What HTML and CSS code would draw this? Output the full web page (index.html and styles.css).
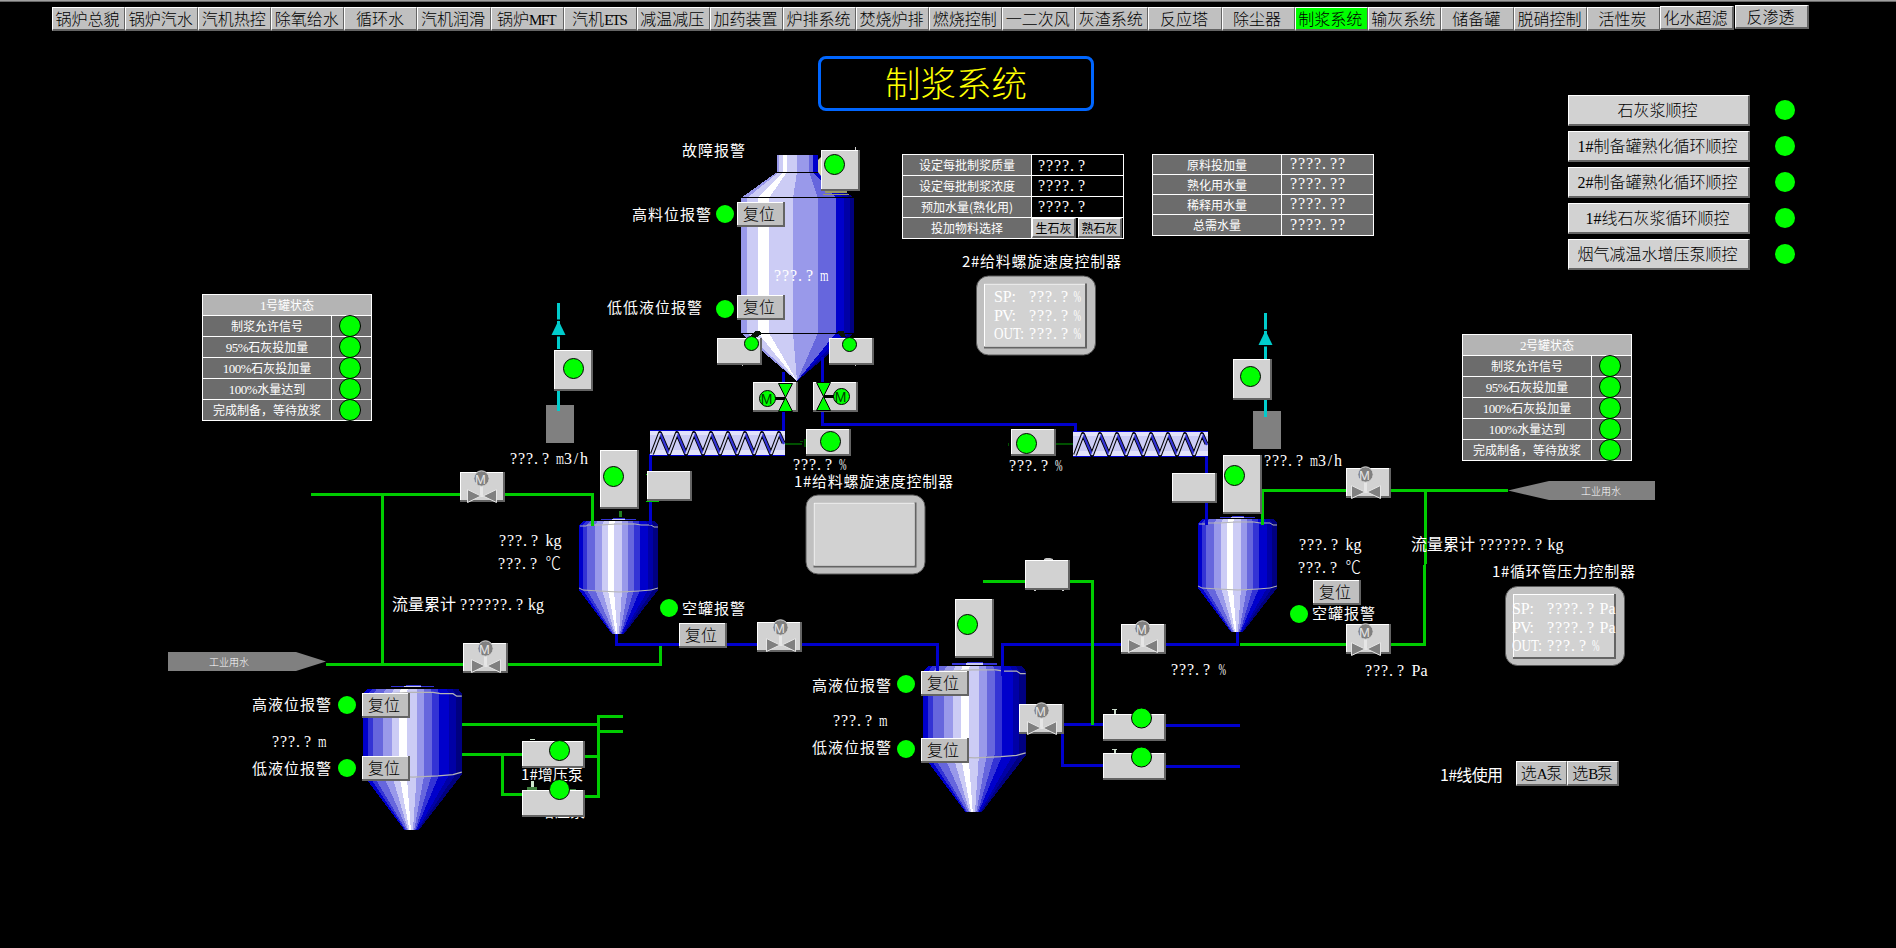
FILE: index.html
```html
<!DOCTYPE html>
<html lang="zh-CN">
<head>
<meta charset="utf-8">
<title>制浆系统</title>
<link rel="stylesheet" href="styles.css">
</head>
<body>
<div class="screen">
<nav class="nav">
<a>锅炉总貌</a><a>锅炉汽水</a><a>汽机热控</a><a>除氧给水</a><a>循环水</a><a>汽机润滑</a><a>锅炉<i class="caps">MFT</i></a><a>汽机<i class="caps">ETS</i></a><a>减温减压</a><a>加药装置</a><a>炉排系统</a><a>焚烧炉排</a><a>燃烧控制</a><a>一二次风</a><a>灰渣系统</a><a>反应塔</a><a>除尘器</a><a class="active">制浆系统</a><a>输灰系统</a><a>储备罐</a><a>脱硝控制</a><a>活性炭</a><a class="up1">化水超滤</a><a class="up2">反渗透</a>
</nav>

<svg class="mimic" width="1896" height="948" viewBox="0 0 1896 948">
<defs>
<symbol id="tank" viewBox="0 0 80 118" preserveAspectRatio="none">
<g shape-rendering="crispEdges">
<path fill="#0000cc" d="M4 3L0 7V72L33 116H34L5 72V7L8 3z"/>
<path fill="#3333d5" d="M7.6 3L4 7V72L33.6 116H35L9 72V7L12 3z"/>
<path fill="#6666dd" d="M11.3 3L8 7V72L34.2 116H36L17 72V7L19 3z"/>
<path fill="#9999ea" d="M18.6 3L16 7V72L35.4 116H37L24 72V7L26 3z"/>
<path fill="#ccccf5" d="M25 3L23 7V72L36 116H38L30 72V7L31 3z"/>
<path fill="#fff" d="M30.4 3L29 7V72L37 116H39L36 72V7L37 3z"/>
<path fill="#ccccf5" d="M35.9 3L35 7V72L38.3 116H41L44 72V7V3z"/>
<path fill="#9999ea" d="M43 3V72L40 116H41L50 72V7L49 3z"/>
<path fill="#6666dd" d="M48.6 3L49 7V72L41 116H42L56 72V7L55 3z"/>
<path fill="#3333d5" d="M54 3L55 7V72L42 116H43L62 72V7L60 3z"/>
<path fill="#0000cc" d="M59.5 3L61 7V72L42.6 116H44L70 72V7L67 3z"/>
<path fill="#0000a6" d="M66.8 3L69 7V72L43.6 116H44.5L75 72V7L72 3z"/>
<path fill="#000080" d="M71.3 3L74 7V72L44.2 116H45L79 72V7L76 3z"/>
<path fill="#3333d5" d="M22 1H34V0H46V1H57V2H22z"/><path fill="#ccccf5" d="M33 1H46V2H33z"/>
</g>
<path fill="none" stroke="#b4b4b4" d="M1 8H7L9 7H22L38 6H56L62 7H72L75 9H79M0 70L4 72L20 73L40 74L60 73L72 72L79 70"/>
</symbol>
<g id="b45"><path fill="#646464" d="M0 0H45V30H0z"/><path fill="#fff" d="M0 0H43V28H0z"/><path fill="#d2d2d2" d="M1 1H43V28H1z"/></g>
<g id="b27"><path fill="#646464" d="M0 0H45V27H0z"/><path fill="#fff" d="M0 0H43V25H0z"/><path fill="#d2d2d2" d="M1 1H43V25H1z"/></g>
<g id="pump"><path fill="#646464" d="M0 0H63V27H0z"/><path fill="#fff" d="M0 0H61V25H0z"/><path fill="#d2d2d2" d="M1 1H61V25H1z"/></g>
<g id="sq"><path fill="#646464" d="M0 0H39V41H0z"/><path fill="#fff" d="M0 0H37V39H0z"/><path fill="#d2d2d2" d="M1 1H37V39H1z"/></g>
<g id="tall"><path fill="#646464" d="M0 0H39V59H0z"/><path fill="#fff" d="M0 0H37V57H0z"/><path fill="#d2d2d2" d="M1 1H37V57H1z"/></g>
<g id="reset"><path fill="#646464" d="M0 0H48V25H0z"/><path fill="#fff" d="M0 0H46V23H0z"/><path fill="#c0c0c0" d="M1 1H46V23H1z"/></g>
<g id="panel"><rect x=".5" y=".5" width="119" height="79" rx="12" fill="#c0c0c0" stroke="#5a5a5a"/><path fill="#646464" d="M8 8H111V73H8z"/><path fill="#fff" d="M8 8H109V71H8z"/><path fill="#d2d2d2" d="M9 9H109V71H9z"/></g>
<circle id="run" r="10" fill="#0f0" stroke="#000"/>
<circle id="runs" r="7" fill="#0f0" stroke="#000"/>
<circle id="alarm" r="9" fill="#0f0"/>
<g id="valve"><path fill="#e6e6e6" d="M20 13H23V25H20z"/><path fill="#808080" stroke="#e6e6e6" d="M7.5 17.500L21 24L7.500 30.500zM36.500 17.500L23 24L36.500 30.500z"/><circle cx="21.500" cy="6.500" r="7.700" fill="#808080" stroke="#d8d8d8"/></g>
<g id="screw">
<path fill="#0000cc" d="M0 0H135V26H0z"/><path fill="#e2e2fb" d="M0 1H135V25H0z"/><path fill="#ccccf5" d="M0 5H135V20H0z"/>
<g fill="none" stroke-linejoin="round">
<path stroke="#000" stroke-width="4" d="M2 24L10 3L19 24L27 3L36 24L44 3L53 24L61 3L70 24L78 3L87 24L95 3L104 24L112 3L121 24L129 3L133.500 13"/>
<path stroke="#3333d5" stroke-width="2.200" d="M10 3L19 24M27 3L36 24M44 3L53 24M61 3L70 24M78 3L87 24M95 3L104 24M112 3L121 24M129 3L134 14"/>
<path stroke="#ccccf5" stroke-width="2" d="M2 24L10 3M19 24L27 3M36 24L44 3M53 24L61 3M70 24L78 3M87 24L95 3M104 24L112 3M121 24L129 3"/>
</g></g>
<g id="vent"><path fill="#00cccc" d="M5.500 0H8.500V46H5.500z"/><path fill="#000" d="M3 16.500H11V18H3zM0 32H14V33.500H0z"/><path fill="#00cccc" d="M7 17.500L14 32H0z"/></g>
</defs>

<!-- silo -->
<g shape-rendering="crispEdges">
<path fill="#0000cc" d="M782 372H785V432H782z"/>
<path fill="#9999ea" d="M777 155H780V172L748 198V333L797 381L741 333V198L777 172z"/>
<path fill="#ccccf5" d="M779 155H784V172L759 198V333L797 381L747 333V198L779 172z"/>
<path fill="#fff" d="M783 155H787V172L769 198V333L797 381L758 333V198L783 172z"/>
<path fill="#ccccf5" d="M787 155H797V172L793 198V333L797 381L769 333V198L787 172z"/>
<path fill="#9999ea" d="M797 155H809V172L818 198V333L797 381L793 333V198L797 172z"/>
<path fill="#6666dd" d="M809 155H813V172L836 198V333L797 381L818 333V198L809 172z"/>
<path fill="#0000cc" d="M813 155H818V172L844 198V333L797 381L836 333V198L813 172z"/>
<path fill="#0000a6" d="M817 172L850 198V333L797 381L844 333V198z"/>
<path fill="#000080" d="M818 172L854 198V333L797 381L850 333V198z"/>
<path fill="#000" d="M776 172H818V173H776zM742 197H853V198H742zM741 333H853V334H741z"/>
<path fill="#0a140a" d="M751 336L755 331H760L762 334L755 338zM836 332L840 331H844L846 337H842z"/>
</g>

<!-- blue slurry lines -->
<g class="pipe blue">
<path d="M822.500 357V424.500H1075.500V432"/>
<path d="M783.500 412V431"/>
<path d="M616.500 632V644.500H937.500V672"/>
<path d="M1237.500 630V644.500H1002.500"/>
<path d="M1064 724.500H1103M1062.500 733V765.500H1103M1166 725.500H1240M1166 766.500H1240"/>
</g>
<!-- green water lines -->
<g class="pipe green">
<path d="M311 494.500H592.500"/>
<path d="M382.500 494V664.500M326 664.500H660.500V646"/>
<path d="M983 581.500H1092.500V724.500"/>
<path d="M1262 490.500H1508M1425.500 490L1424.500 644.500H1240"/>
<path d="M462 724.500H598.500M623 716.500H598.500V796.500H585M598 731.500H623M462 754.500H522M502.500 754V794.500H522M585 756.500H598"/>
</g>

<use href="#tank" x="579" y="518" width="80" height="118"/>
<use href="#tank" x="1198" y="516" width="80" height="118"/>
<use href="#tank" x="363" y="685" width="100" height="147"/>
<use href="#tank" x="923" y="662" width="104" height="153"/>
<g class="pipe blue"><path d="M650.500 454V525M1206.500 453V525M937.500 645V672M1002.500 643V676"/></g>
<g class="pipe green"><path d="M592.500 493V526M1262.500 490V525"/></g>
<path fill="#208020" d="M619 511H622V517H619z"/>

<use href="#screw" x="650" y="430"/>
<use href="#screw" x="1073" y="431"/>
<path fill="#005000" d="M785 443H802V445H785zM804 439H806V447H804zM800 441H803V442H800zM1056 443H1073V445H1056zM1008 443H1009V446H1008z"/>
<path fill="#00cc00" d="M646 501H659V502H646zM646 474H648V475H646z"/>

<!-- vents -->
<use href="#vent" x="551.500" y="303"/>
<use href="#vent" x="1258.500" y="313"/>
<path fill="#808080" d="M546 405H574V443H546zM1253 411H1281V449H1253z"/>
<path fill="#00cccc" d="M557 391H560V411H557zM1264 400H1267V417H1264z"/>
<use href="#sq" x="554" y="350"/><use href="#run" x="573.500" y="368.500"/>
<use href="#sq" x="1233" y="359"/><use href="#run" x="1250.500" y="376.500"/>

<!-- silo equipment -->
<path fill="#cfcfa8" d="M818 160L821 157V176L818 172z"/><path fill="#999966" d="M825 191H847V193H825zM823 194H849V195H823z"/><path fill="#d2d2d2" d="M855 147H856V150H855z"/>
<use href="#sq" x="821" y="150"/><use href="#run" x="834.500" y="164.500"/>
<use href="#b27" x="717" y="338"/><use href="#runs" x="751.500" y="343.500"/>
<use href="#b27" x="829" y="338"/><use href="#runs" x="849.500" y="344.500"/>
<use href="#b45" x="753" y="382"/><use href="#b45" x="813" y="382"/>
<g stroke="#000" fill="#0f0">
<path stroke-width="3" d="M775 398.500H786M824 396.500H834"/>
<path d="M778.500 383.500H792.500L785.500 397.500zM778.500 411.500H792.500L785.500 397.500z"/>
<path d="M816.500 382.500H830.500L823.500 396.500zM816.500 410.500H830.500L823.500 396.500z"/>
<circle cx="767.500" cy="398.500" r="8"/><circle cx="841.500" cy="396.500" r="8"/>
</g>
<g class="motor dark"><text x="766.500" y="403.500">M</text><text x="840.500" y="401.500">M</text></g>

<use href="#b27" x="806" y="429"/><use href="#run" x="830.500" y="441.500"/>
<use href="#b27" x="1011" y="429"/><use href="#run" x="1026.500" y="443.500"/>
<use href="#tall" x="600" y="450"/><use href="#run" x="613.500" y="476.500"/>
<use href="#tall" x="1223" y="455"/><use href="#run" x="1234.500" y="475.500"/>
<use href="#tall" x="955" y="599"/><use href="#run" x="967.500" y="624.500"/>
<use href="#b45" x="647" y="471"/><use href="#b45" x="1172" y="473"/>
<path fill="#c8c8c8" d="M1044 559L1046 558H1050L1053 559V560H1044zM1034 590H1036V591H1034zM1062 590H1064V591H1062zM742 365H743V366H742zM855 365H856V366H855z"/>
<use href="#b45" x="1025" y="560"/>

<!-- motor valves -->
<use href="#b45" x="460" y="472"/><use href="#valve" x="460" y="472"/>
<use href="#b45" x="463" y="643"/><use href="#valve" x="464" y="642"/>
<use href="#b45" x="757" y="622"/><use href="#valve" x="759" y="621"/>
<use href="#b45" x="1121" y="624"/><use href="#valve" x="1121" y="622"/>
<use href="#b45" x="1019" y="704"/><use href="#valve" x="1020" y="704"/>
<use href="#b45" x="1346" y="468"/><use href="#valve" x="1344" y="468"/>
<use href="#b45" x="1346" y="624"/><use href="#valve" x="1344" y="625"/>
<g class="motor"><text x="480.500" y="483.500">M</text><text x="484.500" y="653.500">M</text><text x="779.500" y="632.500">M</text><text x="1141.500" y="633.500">M</text><text x="1040.500" y="715.500">M</text><text x="1364.500" y="479.500">M</text><text x="1364.500" y="636.500">M</text></g>

<!-- pumps -->
<g class="label"><text x="521" y="780" textLength="62">1#增压泵</text><text x="523" y="816.500" textLength="62">2#增压泵</text></g>
<path fill="#d0e8d0" d="M530 739H535V740H530zM531 781H534V787H531z"/><path fill="#408040" d="M527 787H537V790H527zM570 789H576V790H570z"/>
<path fill="#c8d8c8" d="M1112 709H1117V710H1112zM1114 710H1116V714H1114zM1112 749H1117V750H1112zM1114 750H1116V753H1114z"/>
<use href="#pump" x="522" y="741"/><use href="#run" x="559.500" y="750.500"/>
<use href="#pump" x="522" y="790"/><use href="#run" x="559.500" y="789.500"/>
<use href="#pump" x="1103" y="714"/><use href="#run" x="1141.500" y="718"/>
<use href="#pump" x="1103" y="753"/><use href="#run" x="1141.500" y="757"/>

<!-- controllers -->
<use href="#panel" x="805.500" y="494.500"/><use href="#panel" x="976" y="275.500"/><use href="#panel" x="1505" y="586"/>

<!-- alarms -->
<use href="#alarm" x="725" y="214"/><use href="#alarm" x="725" y="309"/>
<use href="#alarm" x="669" y="608"/><use href="#alarm" x="1299" y="614"/>
<use href="#alarm" x="347" y="705"/><use href="#alarm" x="347" y="768"/>
<use href="#alarm" x="906" y="684"/><use href="#alarm" x="906" y="749"/>
<use href="#reset" x="737" y="202"/><use href="#reset" x="737" y="295"/>
<use href="#reset" x="679" y="623"/><use href="#reset" x="1313" y="580"/>
<use href="#reset" x="362" y="693"/><use href="#reset" x="362" y="756"/>
<use href="#reset" x="921" y="671"/><use href="#reset" x="921" y="738"/>
<g class="key">
<text x="743" y="220">复位</text><text x="743" y="313">复位</text><text x="685" y="641">复位</text><text x="1319" y="598">复位</text>
<text x="368" y="711">复位</text><text x="368" y="774">复位</text><text x="927" y="689">复位</text><text x="927" y="756">复位</text>
</g>

<path fill="#808080" d="M168 652H296L326 661.500L296 671H168zM1508 490.500L1549 481H1655V500H1549z"/>
<g class="tiny"><text x="209" y="665.500">工业用水</text><text x="1581" y="494.500">工业用水</text></g>

<g class="label">
<text x="682" y="156" textLength="63">故障报警</text>
<text x="632" y="220" textLength="79">高料位报警</text>
<text x="607" y="313" textLength="95">低低液位报警</text>
<text x="962" y="267" textLength="159">2#给料螺旋速度控制器</text>
<text x="794" y="487" textLength="159">1#给料螺旋速度控制器</text>
<text x="682" y="614" textLength="63">空罐报警</text>
<text x="1312" y="619" textLength="63">空罐报警</text>
<text x="252" y="710" textLength="79">高液位报警</text>
<text x="252" y="774" textLength="79">低液位报警</text>
<text x="812" y="691" textLength="79">高液位报警</text>
<text x="812" y="753" textLength="79">低液位报警</text>
<text x="1492" y="577" textLength="143">1#循环管压力控制器</text>
</g>
<g class="song">
<text x="392" y="610">流量累计</text><text x="1411" y="550">流量累计</text><text x="1440" y="781" textLength="63">1#线使用</text>
</g>

<g class="num">
<text x="774" y="281" dx="0 0 0 0 3.1">???.?</text><text x="510" y="464" dx="0 0 0 0 3.1">???.?</text><text x="499" y="546" dx="0 0 0 0 3.1">???.?</text><text x="498" y="569" dx="0 0 0 0 3.1">???.?</text>
<text x="460" y="610" dx="0 0 0 0 0 0 0 3.1">??????.?</text><text x="272" y="747" dx="0 0 0 0 3.1">???.?</text><text x="833" y="726" dx="0 0 0 0 3.1">???.?</text>
<text x="793" y="470" dx="0 0 0 0 3.1">???.?</text><text x="1009" y="471" dx="0 0 0 0 3.1">???.?</text><text x="1171" y="675" dx="0 0 0 0 3.1">???.?</text>
<text x="1264" y="466" dx="0 0 0 0 3.1">???.?</text><text x="1299" y="550" dx="0 0 0 0 3.1">???.?</text><text x="1298" y="573" dx="0 0 0 0 3.1">???.?</text>
<text x="1479" y="550" dx="0 0 0 0 0 0 0 3.1">??????.?</text><text x="1365" y="676" dx="0 0 0 0 3.1">???.?</text>
<text x="1029" y="302" dx="0 0 0 0 3.1">???.?</text><text x="1029" y="321" dx="0 0 0 0 3.1">???.?</text><text x="1029" y="339" dx="0 0 0 0 3.1">???.?</text>
<text x="1547" y="614" dx="0 0 0 0 0 3.1">????.?</text><text x="1547" y="633" dx="0 0 0 0 0 3.1">????.?</text><text x="1547" y="651" dx="0 0 0 0 3.1">???.?</text>
</g>
<g class="unit">
<text x="820" y="281" textLength="8.5" lengthAdjust="spacingAndGlyphs">m</text><text x="318" y="747" textLength="8.5" lengthAdjust="spacingAndGlyphs">m</text><text x="879" y="726" textLength="8.5" lengthAdjust="spacingAndGlyphs">m</text>
<text x="556" y="464" textLength="8" lengthAdjust="spacingAndGlyphs">m</text><text x="564" y="464" textLength="24">3/h</text>
<text x="1310" y="466" textLength="8" lengthAdjust="spacingAndGlyphs">m</text><text x="1318" y="466" textLength="24">3/h</text>
<text x="545.500" y="546" textLength="16">kg</text><text x="528" y="610" textLength="16">kg</text><text x="1345.500" y="550" textLength="16">kg</text><text x="1547.500" y="550" textLength="16">kg</text>
<text x="839" y="470" textLength="7.500" lengthAdjust="spacingAndGlyphs">%</text><text x="1055" y="471" textLength="7.500" lengthAdjust="spacingAndGlyphs">%</text><text x="1218.500" y="675" textLength="7.500" lengthAdjust="spacingAndGlyphs">%</text>
<text x="1411.500" y="676" textLength="16">Pa</text>
<text x="1073.500" y="302" textLength="7.500" lengthAdjust="spacingAndGlyphs">%</text><text x="1073.500" y="321" textLength="7.500" lengthAdjust="spacingAndGlyphs">%</text><text x="1073.500" y="339" textLength="7.500" lengthAdjust="spacingAndGlyphs">%</text>
<text x="1599.500" y="614" textLength="16">Pa</text><text x="1599.500" y="633" textLength="16">Pa</text><text x="1592" y="651" textLength="7.500" lengthAdjust="spacingAndGlyphs">%</text>
<text x="994" y="302" textLength="22">SP:</text><text x="994" y="321" textLength="22">PV:</text><text x="994" y="339" textLength="30" lengthAdjust="spacingAndGlyphs">OUT:</text>
<text x="1512" y="614" textLength="22">SP:</text><text x="1512" y="633" textLength="22">PV:</text><text x="1512" y="651" textLength="30" lengthAdjust="spacingAndGlyphs">OUT:</text>
</g>
<g class="degree"><text x="545.500" y="569.500" textLength="15.500" lengthAdjust="spacingAndGlyphs">℃</text><text x="1345.500" y="573.500" textLength="15.500" lengthAdjust="spacingAndGlyphs">℃</text></g>
</svg>

<h1 class="title">制浆系统</h1>

<div class="side">
<div><button>石灰浆顺控</button><b></b></div>
<div><button><i>1#</i>制备罐熟化循环顺控</button><b></b></div>
<div><button><i>2#</i>制备罐熟化循环顺控</button><b></b></div>
<div><button><i>1#</i>线石灰浆循环顺控</button><b></b></div>
<div><button>烟气减温水增压泵顺控</button><b></b></div>
</div>

<div class="grid setpoints">
<span>设定每批制浆质量</span><em class="low">????<s>.</s>?</em>
<span>设定每批制浆浓度</span><em>????<s>.</s>?</em>
<span>预加水量(熟化用)</span><em>????<s>.</s>?</em>
<span>投加物料选择</span><div class="choice"><button>生石灰</button><button>熟石灰</button></div>
</div>

<div class="grid totals">
<span>原料投加量</span><em>????<s>.</s>??</em>
<span>熟化用水量</span><em>????<s>.</s>??</em>
<span>稀释用水量</span><em>????<s>.</s>??</em>
<span>总需水量</span><em class="low">????<s>.</s>??</em>
</div>

<div class="grid status one">
<strong><i>1</i>号罐状态</strong>
<span>制浆允许信号</span><u></u><span><i>95%</i>石灰投加量</span><u></u><span><i>100%</i>石灰投加量</span><u></u><span><i>100%</i>水量达到</span><u></u><span>完成制备，等待放浆</span><u></u>
</div>
<div class="grid status two">
<strong><i>2</i>号罐状态</strong>
<span>制浆允许信号</span><u></u><span><i>95%</i>石灰投加量</span><u></u><span><i>100%</i>石灰投加量</span><u></u><span><i>100%</i>水量达到</span><u></u><span>完成制备，等待放浆</span><u></u>
</div>

<div class="select"><button>选<i class="caps">A</i>泵</button><button>选<i class="caps">B</i>泵</button></div>
</div>
</body>
</html>
```
FILE: styles.css
```css
* { box-sizing: border-box; }
body { margin: 0; background: #000; overflow: hidden; }
.screen {
  position: relative; width: 1896px; height: 948px; background: #000;
  border-top: 1px solid #a0a0a0; box-shadow: inset 0 1px #696969;
  font-family: "Noto Sans CJK SC", sans-serif; font-weight: 300; font-size: 16px;
}
i { font-style: normal; font-family: "Liberation Serif", serif; }
.caps { display: inline-block; font-size: 15px; letter-spacing: -1.5px; }
button { font: inherit; padding: 0; margin: 0; border-radius: 0; color: #000; white-space: nowrap; }

.nav { display: flex; padding: 6px 0 0 52px; position: relative; z-index: 2; }
.nav a {
  width: 73.1px; height: 24px; line-height: 20px; text-align: center; white-space: nowrap; color: #000;
  background: #c0c0c0; border: solid; border-width: 1px 1px 2px 1px; padding-right: 2px;
  border-color: #fff #646464 #646464 #fff;
}
.nav .active { background: #0f0; }
.nav .up1 { margin-top: -1px; width: 74px; border-right-width: 2px; }
.nav .up2 { margin: -2px 0 0 1px; width: 74px; border-right-width: 2px; }

.mimic { position: absolute; left: 0; top: -1px; width: 1896px; height: 948px; pointer-events: none; }
.pipe { fill: none; stroke-width: 3; shape-rendering: crispEdges; }
.blue { stroke: #0000cc; }
.green { stroke: #00cc00; }
.mimic text { white-space: pre; }
.label { fill: #fff; font-size: 15px; font-weight: 400; }
.song { fill: #fff; font-size: 16px; font-weight: 400; }
.degree { fill: #fff; font-size: 18px; }
.key { fill: #000; font-size: 16px; }
.tiny { fill: #fff; font-size: 10px; }
.num { fill: #fff; font-family: "Liberation Serif", serif; font-size: 16px; letter-spacing: .9px; }
.unit { fill: #fff; font-family: "Liberation Serif", serif; font-size: 16px; }
.motor { fill: #e6e6e6; font-family: "Liberation Sans", sans-serif; font-size: 13px; font-weight: 400; text-anchor: middle; }
.motor.dark { fill: #003c00; font-size: 14px; }

.title {
  position: absolute; left: 818px; top: 55px; width: 276px; height: 55px; margin: 0;
  border: 3px solid #0066ff; border-radius: 8px; color: #ff0; text-align: center;
  font-size: 35.500px; font-weight: 300; line-height: 45px;
}

.side { position: absolute; left: 1568px; top: 94px; display: grid; gap: 5px; }
.side div { display: flex; align-items: flex-start; gap: 25px; }
.side button {
  width: 182px; height: 31px; background: #d2d2d2; border: solid;
  border-width: 1px 2px 2px 1px; border-color: #fff #646464 #646464 #fff; padding: 0 2px 2px 0;
}
.side b { width: 20px; height: 20px; margin-top: 5px; border-radius: 50%; background: #0f0; }

.grid {
  position: absolute; display: grid; gap: 1px; padding: 1px; background: #fff;
  color: #fff; font-size: 12px; font-weight: 400; text-align: center;
}
.grid i { font-size: 13px; letter-spacing: -.5px; }
.grid span, .grid u { background: #6c6c6c; line-height: 19px; white-space: nowrap; overflow: hidden; }
.grid em {
  font: 16px/20px "Liberation Serif", serif; letter-spacing: .9px;
  text-align: left; padding-left: 6px; background: #000; overflow: hidden;
}
.grid s { display: inline-block; width: 8px; text-decoration: none; }
.grid em.low { line-height: 22px; }
.setpoints { left: 902px; top: 153px; width: 222px; height: 85px; grid-template-columns: 128px 1fr; grid-template-rows: repeat(4, 20px); }
.choice { display: flex; gap: 2px; background: #000; }
.choice button {
  width: 44px; height: 20px; line-height: 15px; background: #c0c0c0; border: solid;
  border-width: 1px 2px 2px 1px; border-color: #fff #646464 #646464 #fff;
}
.totals { left: 1152px; top: 153px; width: 222px; height: 82px; grid-template-columns: 128px 1fr; grid-template-rows: 19px 19px 19px 20px; }
.totals em { background: #6c6c6c; padding-left: 8px; line-height: 17px; }
.totals em.low { line-height: 20px; }
.status { width: 170px; height: 127px; grid-template-columns: 128px 1fr; grid-template-rows: repeat(6, 20px); }
.status strong { grid-column: 1 / 3; background: #b4b4b4; font-weight: 400; line-height: 20px; }
.status u { display: flex; justify-content: center; align-items: center; text-decoration: none; overflow: visible; padding-right: 3px; }
.status u::before { content: ""; width: 20px; height: 20px; border-radius: 50%; background: #0f0; border: 1px solid #000; }
.one { left: 202px; top: 293px; }
.two { left: 1462px; top: 333px; }

.select { position: absolute; left: 1516px; top: 760px; display: flex; }
.select button {
  width: 51px; height: 25px; background: #c0c0c0; border: solid; line-height: 20px;
  border-width: 1px 1px 2px 1px; border-color: #fff #646464 #646464 #fff;
}
.select button:last-child { width: 52px; border-right-width: 2px; }
```
